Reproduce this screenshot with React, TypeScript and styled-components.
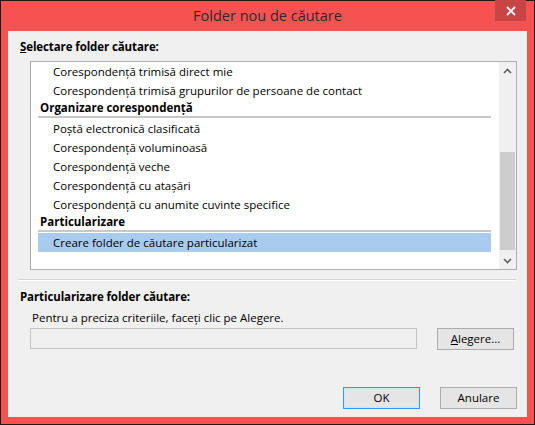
import React from "react";
import styled, { createGlobalStyle } from "styled-components";

const GlobalStyle = createGlobalStyle`
  html, body {
    margin: 0;
    padding: 0;
    background: #f75252;
  }
  body {
    font-family: "Open Sans", "Noto Sans", sans-serif;
    font-size: 11.5px;
    color: #000;
  }
`;

type Entry =
  | { kind: "header"; label: string }
  | { kind: "item"; label: string; selected?: boolean };

const entries: Entry[] = [
  { kind: "item", label: "Corespondență trimisă direct mie" },
  { kind: "item", label: "Corespondență trimisă grupurilor de persoane de contact" },
  { kind: "header", label: "Organizare corespondență" },
  { kind: "item", label: "Poștă electronică clasificată" },
  { kind: "item", label: "Corespondență voluminoasă" },
  { kind: "item", label: "Corespondență veche" },
  { kind: "item", label: "Corespondență cu atașări" },
  { kind: "item", label: "Corespondență cu anumite cuvinte specifice" },
  { kind: "header", label: "Particularizare" },
  { kind: "item", label: "Creare folder de căutare particularizat", selected: true },
];

export default function App() {
  return (
    <>
      <GlobalStyle />
      <Window>
        <TitleBar>
          <Title>Folder nou de căutare</Title>
          <CloseButton>
            <svg width="10" height="10" viewBox="0 0 10 10">
              <path d="M1 1 L9 9 M9 1 L1 9" stroke="#fff" strokeWidth="1.8" />
            </svg>
          </CloseButton>
        </TitleBar>
        <Panel>
          <SectionLabel>
            <u>S</u>electare folder căutare:
          </SectionLabel>
          <ListBox>
            <Rows>
              {entries.map((e, i) =>
                e.kind === "header" ? (
                  <GroupHeader key={i}>{e.label}</GroupHeader>
                ) : (
                  <Row key={i} $selected={!!e.selected}>
                    {e.label}
                  </Row>
                )
              )}
            </Rows>
            <ScrollBar>
              <Arrow>
                <svg width="9" height="6" viewBox="0 0 9 6">
                  <path d="M1 5 L4.5 1.5 L8 5" stroke="#606060" strokeWidth="1.6" fill="none" />
                </svg>
              </Arrow>
              <Track>
                <Thumb />
              </Track>
              <Arrow>
                <svg width="9" height="6" viewBox="0 0 9 6">
                  <path d="M1 1 L4.5 4.5 L8 1" stroke="#606060" strokeWidth="1.6" fill="none" />
                </svg>
              </Arrow>
            </ScrollBar>
          </ListBox>
          <Etched />
          <SectionLabel $gap={7}>Particularizare folder căutare:</SectionLabel>
          <Hint>Pentru a preciza criteriile, faceți clic pe Alegere.</Hint>
          <CriteriaRow>
            <CriteriaField />
            <Button>
              <u>A</u>legere...
            </Button>
          </CriteriaRow>
          <Footer>
            <Button $primary>OK</Button>
            <Button>Anulare</Button>
          </Footer>
        </Panel>
      </Window>
    </>
  );
}

const Window = styled.div`
  width: 535px;
  height: 425px;
  box-sizing: border-box;
  border: 1px solid #1a1a1a;
  background: #f75252;
  padding: 0 7px 7px 7px;
  display: flex;
  flex-direction: column;
`;

const TitleBar = styled.div`
  height: 30px;
  display: flex;
  align-items: center;
  justify-content: center;
  position: relative;
`;

const Title = styled.div`
  font-family: "Open Sans", sans-serif;
  font-size: 14.5px;
  color: #2b2b2b;
  margin-top: -1px;
`;

const CloseButton = styled.div`
  position: absolute;
  top: -1px;
  right: 1px;
  width: 31px;
  height: 21px;
  background: #c74545;
  display: flex;
  align-items: center;
  justify-content: center;
`;

const Panel = styled.div`
  flex: 1;
  background: #f0f0f0;
  padding: 7px 10px 0 12px;
  display: flex;
  flex-direction: column;
`;

const SectionLabel = styled.div<{ $gap?: number }>`
  font-weight: 700;
  height: 17px;
  line-height: 17px;
  letter-spacing: -0.1px;
  margin-top: ${(p) => p.$gap ?? 0}px;
`;

const ListBox = styled.div`
  margin: 6px 0 0 10px;
  height: 209px;
  box-sizing: border-box;
  border: 1px solid #adadad;
  background: #fff;
  display: flex;
  overflow: hidden;
`;

const Rows = styled.div`
  flex: 1;
  padding: 0 8px 0 7px;
  overflow: hidden;
`;

const Row = styled.div<{ $selected?: boolean }>`
  height: 19px;
  line-height: 19px;
  padding-left: 15px;
  white-space: nowrap;
  background: ${(p) => (p.$selected ? "#a9cbee" : "transparent")};
`;

const GroupHeader = styled.div`
  height: 16px;
  line-height: 16px;
  padding-left: 2px;
  font-weight: 700;
  border-bottom: 2px solid #c8c8c8;
  margin-bottom: 1px;
  white-space: nowrap;
`;

const ScrollBar = styled.div`
  width: 17px;
  background: #f0f0f0;
  display: flex;
  flex-direction: column;
`;

const Arrow = styled.div`
  height: 17px;
  display: flex;
  align-items: center;
  justify-content: center;
`;

const Track = styled.div`
  flex: 1;
  display: flex;
  flex-direction: column;
  justify-content: flex-end;
  padding: 0 1px;
`;

const Thumb = styled.div`
  height: 98px;
  margin-bottom: 2px;
  background: #cdcdcd;
`;

const Etched = styled.div`
  height: 0;
  margin: 9px 1px 0 -2px;
  border-top: 1px solid #d5d5d5;
  border-bottom: 1px solid #fff;
`;

const Hint = styled.div`
  margin: 4px 0 0 12px;
  height: 17px;
  line-height: 17px;
`;

const CriteriaRow = styled.div`
  display: flex;
  gap: 20px;
  margin: 2px 0 0 10px;
`;

const CriteriaField = styled.div`
  width: 387px;
  height: 21px;
  box-sizing: border-box;
  border: 1px solid #c3c3c3;
  background: #f0f0f0;
`;

const Button = styled.div<{ $primary?: boolean }>`
  width: 77px;
  height: 22px;
  box-sizing: border-box;
  border: 1px solid ${(p) => (p.$primary ? "#3399ff" : "#acacac")};
  box-shadow: ${(p) => (p.$primary ? "inset 0 0 0 1px #cde6ff" : "none")};
  background: #e5e5e5;
  display: flex;
  align-items: center;
  justify-content: center;
  padding-bottom: 1px;
`;

const Footer = styled.div`
  display: flex;
  justify-content: flex-end;
  gap: 20px;
  margin-top: 37px;
`;
